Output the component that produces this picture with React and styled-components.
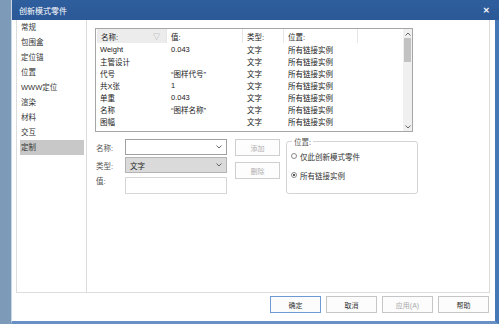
import React from "react";
import styled, { createGlobalStyle } from "styled-components";

const Global = createGlobalStyle`
  html, body { margin: 0; padding: 0; background: #7d9bb8; overflow: hidden; }
  * { box-sizing: border-box; }
  body { font-family: "Liberation Sans", "Noto Sans CJK SC", sans-serif; font-size: 7.5px; color: #222; }
`;

const Desktop = styled.div`
  width: 499px;
  height: 324px;
  display: flex;
  padding-left: 11px;
`;

const Window = styled.div`
  flex: 1;
  display: flex;
  flex-direction: column;
  background: #fff;
  border-left: 1px solid #c9d5e2;
  border-right: 4px solid #4677b6;
  border-bottom: 3px solid #6890c4;
`;

const TitleBar = styled.div`
  height: 20px;
  flex: none;
  display: flex;
  align-items: center;
  justify-content: space-between;
  padding: 0 9px 0 7px;
  background: linear-gradient(#2f5e9e, #2b5896);
  color: #fff;
  font-size: 8px;
  margin-right: -4px;
`;

const Close = styled.span`
  font-size: 9px;
  font-weight: bold;
  font-family: "DejaVu Sans", sans-serif;
`;

const Body = styled.div`
  flex: 1;
  display: flex;
  flex-direction: column;
  padding: 0 5px 0 4px;
`;

const Frame = styled.div`
  height: 273px;
  display: flex;
  border: 1px solid #dcdcdc;
  border-top: none;
`;

const Nav = styled.div`
  width: 70px;
  flex: none;
  border-right: 1px solid #dcdcdc;
  padding: 0 2px 0 3px;
`;

const NavItem = styled.div`
  height: 15px;
  line-height: 15px;
  padding-left: 1px;
  background: ${(p) => (p.$active ? "#c8c8c8" : "transparent")};
  color: #333;
`;

const Main = styled.div`
  flex: 1;
  padding: 8px 0 0 8px;
`;

const Table = styled.div`
  width: 318px;
  height: 104px;
  border: 1px solid #a6a6a6;
  display: flex;
`;

const Grid = styled.div`
  flex: 1;
  display: flex;
  flex-direction: column;
`;

const Row = styled.div`
  display: grid;
  grid-template-columns: 71px 76px 41px 74px 1fr;
  height: ${(p) => (p.$head ? "14px" : "12px")};
  align-items: center;
`;

const Cell = styled.div`
  height: 100%;
  display: flex;
  align-items: center;
  justify-content: space-between;
  padding: 0 6px 0 4px;
  white-space: nowrap;
  background: ${(p) => (p.$shade ? "#ececec" : "transparent")};
  border-right: ${(p) => (p.$div ? "1px solid #e6e6e6" : "none")};
  margin-left: ${(p) => (p.$shade ? "1px" : "0")};
`;

const FilterIcon = styled.span`
  color: #999;
  font-size: 7px;
`;

const Scroll = styled.div`
  width: 9px;
  flex: none;
  background: #f0f0f0;
  display: flex;
  flex-direction: column;
  align-items: center;
`;

const Arrow = styled.div`
  height: 9px;
  display: flex;
  align-items: center;
  justify-content: center;
`;

const Thumb = styled.div`
  width: 7px;
  height: 24px;
  background: #c2c2c2;
`;

const Spacer = styled.div`
  flex: 1;
`;

const FormRow = styled.div`
  display: flex;
  margin-top: 7px;
  align-items: flex-start;
`;

const FieldGrid = styled.div`
  display: grid;
  grid-template-columns: 30px 102px;
  grid-template-rows: 16px 16px 17px;
  row-gap: 2px;
  align-items: center;
`;

const Label = styled.div`
  color: #555;
  padding-left: 1px;
  align-self: ${(p) => (p.$top ? "start" : "center")};
`;

const Combo = styled.div`
  height: 100%;
  display: flex;
  align-items: center;
  justify-content: space-between;
  padding: 0 4px 0 4px;
  border: 1px solid ${(p) => (p.$filled ? "#b4b4b4" : "#a0a0a0")};
  background: ${(p) => (p.$filled ? "#dadada" : "#fff")};
`;

const Input = styled.div`
  height: 100%;
  border: 1px solid #d6d6d6;
  background: #fff;
  margin-top: 4px;
  height: 17px;
`;

const BtnCol = styled.div`
  display: flex;
  flex-direction: column;
  gap: 6px;
  margin-left: 8px;
  width: 45px;
`;

const SmallBtn = styled.div`
  height: 17px;
  border: 1px solid #cfcfcf;
  background: #fdfdfd;
  color: #b0b0b0;
  display: flex;
  align-items: center;
  justify-content: center;
  font-size: 7px;
`;

const Group = styled.fieldset`
  margin: -3px 0 0 6px;
  width: 132px;
  height: 58px;
  border: 1px solid #d4d4d4;
  border-radius: 3px;
  padding: 3px 0 0 4px;
`;

const Legend = styled.legend`
  padding: 0 2px;
  margin-left: 1px;
  color: #555;
`;

const Radio = styled.div`
  display: flex;
  align-items: center;
  gap: 3px;
  height: 12px;
  margin-bottom: ${(p) => (p.$gap ? "7px" : "0")};
  color: #333;
`;

const Dot = styled.span`
  width: 6px;
  height: 6px;
  border-radius: 50%;
  border: 1px solid #8a8a8a;
  background: #fff;
  display: flex;
  align-items: center;
  justify-content: center;
  &::after {
    content: "";
    width: 2px;
    height: 2px;
    border-radius: 50%;
    background: ${(p) => (p.$on ? "#222" : "transparent")};
  }
`;

const Footer = styled.div`
  flex: 1;
  display: flex;
  justify-content: flex-end;
  align-items: flex-start;
  gap: 5px;
  padding: 3px 1px 0 0;
`;

const DlgBtn = styled.div`
  width: 51px;
  height: 17px;
  display: flex;
  align-items: center;
  justify-content: center;
  border: 1px solid ${(p) => (p.$primary ? "#6d9ad2" : "#c6c6c6")};
  background: #fcfcfc;
  color: ${(p) => (p.$disabled ? "#a8a8a8" : "#333")};
  font-size: 7px;
`;

const Chevron = ({ up }) => (
  <svg width="6" height="4" viewBox="0 0 6 4">
    <polyline
      points={up ? "0.5,3.5 3,1 5.5,3.5" : "0.5,0.5 3,3 5.5,0.5"}
      fill="none"
      stroke="#666"
      strokeWidth="1"
    />
  </svg>
);

const navItems = ["常规", "包围盒", "定位锚", "位置", "WWW定位", "渲染", "材料", "交互", "定制"];

const rows = [
  ["Weight", "0.043", "文字", "所有链接实例"],
  ["主管设计", "", "文字", "所有链接实例"],
  ["代号", "“图样代号”", "文字", "所有链接实例"],
  ["共X张", "1", "文字", "所有链接实例"],
  ["单重", "0.043", "文字", "所有链接实例"],
  ["名称", "“图样名称”", "文字", "所有链接实例"],
  ["图幅", "", "文字", "所有链接实例"],
];

export default function App() {
  return (
    <>
      <Global />
      <Desktop>
        <Window>
          <TitleBar>
            <span>创新模式零件</span>
            <Close>×</Close>
          </TitleBar>
          <Body>
            <Frame>
              <Nav>
                {navItems.map((n, i) => (
                  <NavItem key={n} $active={i === navItems.length - 1}>
                    {n}
                  </NavItem>
                ))}
              </Nav>
              <Main>
                <Table>
                  <Grid>
                    <Row $head>
                      <Cell $shade $div>
                        <span>名称:</span>
                        <FilterIcon>▽</FilterIcon>
                      </Cell>
                      <Cell $div>值:</Cell>
                      <Cell $div>类型:</Cell>
                      <Cell $div>位置:</Cell>
                      <Cell />
                    </Row>
                    {rows.map((r) => (
                      <Row key={r[0]}>
                        <Cell>{r[0]}</Cell>
                        <Cell>{r[1]}</Cell>
                        <Cell>{r[2]}</Cell>
                        <Cell>{r[3]}</Cell>
                        <Cell />
                      </Row>
                    ))}
                  </Grid>
                  <Scroll>
                    <Arrow>
                      <Chevron up />
                    </Arrow>
                    <Thumb />
                    <Spacer />
                    <Arrow>
                      <Chevron />
                    </Arrow>
                  </Scroll>
                </Table>
                <FormRow>
                  <FieldGrid>
                    <Label>名称:</Label>
                    <Combo>
                      <span />
                      <Chevron />
                    </Combo>
                    <Label>类型:</Label>
                    <Combo $filled>
                      <span>文字</span>
                      <Chevron />
                    </Combo>
                    <Label $top>值:</Label>
                    <Input />
                  </FieldGrid>
                  <BtnCol>
                    <SmallBtn>添加</SmallBtn>
                    <SmallBtn>删除</SmallBtn>
                  </BtnCol>
                  <Group>
                    <Legend>位置:</Legend>
                    <Radio $gap>
                      <Dot />
                      <span>仅此创新模式零件</span>
                    </Radio>
                    <Radio>
                      <Dot $on />
                      <span>所有链接实例</span>
                    </Radio>
                  </Group>
                </FormRow>
              </Main>
            </Frame>
            <Footer>
              <DlgBtn $primary>确定</DlgBtn>
              <DlgBtn>取消</DlgBtn>
              <DlgBtn $disabled>应用(A)</DlgBtn>
              <DlgBtn>帮助</DlgBtn>
            </Footer>
          </Body>
        </Window>
      </Desktop>
    </>
  );
}
